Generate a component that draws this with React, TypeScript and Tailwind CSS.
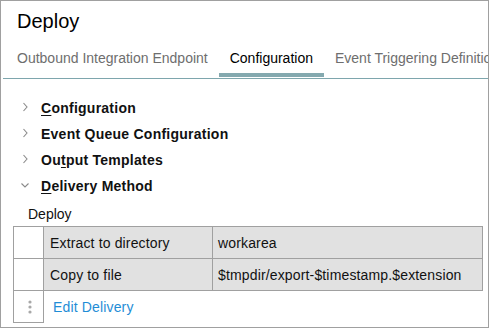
import React from "react";

const tabs = [
  { label: "Outbound Integration Endpoint", active: false },
  { label: "Configuration", active: true },
  { label: "Event Triggering Definition", active: false },
];

function ChevronRight() {
  return (
    <svg width="8" height="10" viewBox="0 0 8 10" className="shrink-0 -mt-[3px]">
      <path d="M2.5 1 L6 5 L2.5 9" fill="none" stroke="#8a8a8a" strokeWidth="1.1" />
    </svg>
  );
}

function ChevronDown() {
  return (
    <svg width="8" height="10" viewBox="0 0 8 10" className="shrink-0 -mt-[3px]">
      <path d="M0.5 3.5 L4 7 L7.5 3.5" fill="none" stroke="#8a8a8a" strokeWidth="1.1" />
    </svg>
  );
}

function Kebab() {
  return (
    <svg width="4" height="14" viewBox="0 0 4 14">
      <circle cx="2" cy="2" r="1.6" fill="#a8a8a8" />
      <circle cx="2" cy="7" r="1.6" fill="#a8a8a8" />
      <circle cx="2" cy="12" r="1.6" fill="#a8a8a8" />
    </svg>
  );
}

function TreeRow({ open, children }: { open?: boolean; children: React.ReactNode }) {
  return (
    <div className="flex items-center h-[26px] pl-[20px] gap-[12px]">
      {open ? <ChevronDown /> : <ChevronRight />}
      <span className="text-[14px] leading-[20px] font-bold text-[#111] tracking-[0.25px]">
        {children}
      </span>
    </div>
  );
}

const rows = [
  { name: "Extract to directory", value: "workarea" },
  { name: "Copy to file", value: "$tmpdir/export-$timestamp.$extension" },
];

export default function App() {
  return (
    <div className="w-[489px] h-[328px] border border-[#a0a0a0] bg-white overflow-hidden font-['Liberation_Sans',Arial,sans-serif] text-[#111]">
      <div className="pl-[16px] pt-[8px] text-[20px] leading-[24px] text-black">Deploy</div>

      {/* last tab runs past the panel edge, as in the app */}
      <div className="mt-[5px] ml-[2px] pl-[3px] pb-[1px] border-b border-[#7ea6ad] flex whitespace-nowrap overflow-hidden">
        {tabs.map((t) => (
          <div
            key={t.label}
            className={
              "shrink-0 px-[11px] pt-[10px] pb-[5px] border-b-4 text-[14px] leading-[20px] " +
              (t.active ? "border-[#84a9af] text-black" : "border-transparent text-[#6e6e6e]")
            }
          >
            {t.label}
          </div>
        ))}
      </div>

      <div className="pt-[16px]">
        <TreeRow>
          <span className="underline underline-offset-2">C</span>onfiguration
        </TreeRow>
        <TreeRow>Event Queue Configuration</TreeRow>
        <TreeRow>
          Ou<span className="underline underline-offset-2">t</span>put Templates
        </TreeRow>
        <TreeRow open>
          <span className="underline underline-offset-2">D</span>elivery Method
        </TreeRow>
      </div>

      <div className="mt-[5px] h-[22px] pl-[27px] text-[14px] leading-[20px]">Deploy</div>

      <div className="ml-[12px] w-[470px] border-l border-t border-[#a0a0a0] text-[14px] leading-[20px] tracking-[0.15px]">
        {rows.map((r) => (
          <div key={r.name} className="flex h-[32px]">
            <div className="w-[30px] border-r border-b border-[#a0a0a0]" />
            <div className="w-[169px] border-r border-b border-[#a0a0a0] bg-[#e1e1e1] pl-[6px] flex items-center">
              {r.name}
            </div>
            <div className="w-[270px] border-r border-b border-[#a0a0a0] bg-[#e1e1e1] pl-[5px] flex items-center">
              {r.value}
            </div>
          </div>
        ))}
        <div className="flex h-[32px]">
          <div className="w-[30px] border-r border-b border-[#a0a0a0] flex items-center justify-center pl-[3px]">
            <Kebab />
          </div>
          <div className="pl-[9px] flex items-center text-[#1f8dd6]">Edit Delivery</div>
        </div>
      </div>
    </div>
  );
}
